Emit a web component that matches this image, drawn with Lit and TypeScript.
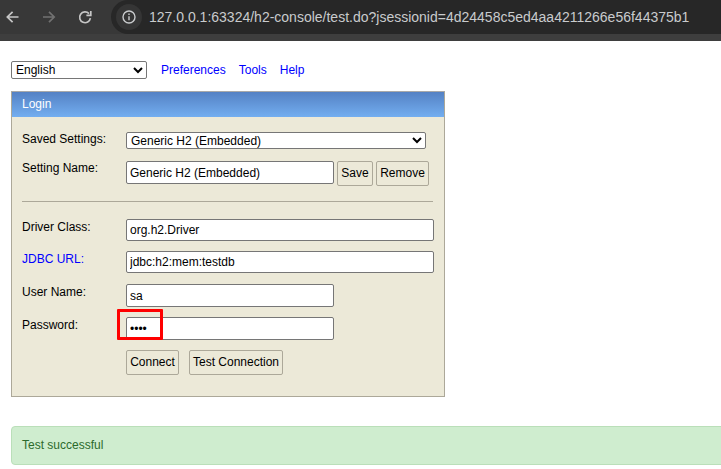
import { LitElement, html, css } from "lit";
import { customElement } from "lit/decorators.js";

@customElement("app-root")
export class AppRoot extends LitElement {
  static styles = css`
    :host { display: block; position: relative; width: 721px; height: 469px; overflow: hidden; background: #fff; font-family: "Liberation Sans", Arial, sans-serif; font-size: 12px; color: #000; }
    .chrome { height: 41px; box-sizing: border-box; background: #383838; display: flex; align-items: stretch; }
    .nav { width: 111px; flex: none; display: flex; align-items: center; height: 34px; padding-left: 4px; box-sizing: border-box; }
    .nav svg { width: 16px; height: 16px; display: block; flex: none; }
    .nav .fw { margin-left: 21px; }
    .nav .rl { margin-left: 20px; }
    .omni { flex: 1; display: flex; flex-direction: column; }
    .pill { height: 34px; background: #272727; border-radius: 17px 0 0 17px; display: flex; align-items: center; padding-left: 5px; color: #c9cbcd; font-size: 14px; white-space: nowrap; gap: 7px; }
    .strip { flex: 1; background: #3e3e3e; margin-left: -111px; }
    .info { width: 26px; height: 26px; border-radius: 50%; background: #353535; display: flex; align-items: center; justify-content: center; flex: none; }
    .top { display: flex; align-items: center; padding: 20px 0 0 11px; height: 18px; }
    select { font-family: "Liberation Sans", Arial, sans-serif; font-size: 12px; box-sizing: border-box; background: #fff; color: #000; border: 1px solid #767676; border-radius: 2px; margin: 0; }
    .lang { width: 136px; height: 18px; margin-right: 14px; }
    a { color: #0000ff; text-decoration: none; }
    .top a { margin-right: 13px; }
    .panel { box-sizing: border-box; margin: 12px 0 0 11px; width: 434px; height: 306px; border: 1px solid #aca899; border-top-color: #a9a9a9; background: #ece9d8; }
    .head { height: 25px; background: linear-gradient(#5481c4, #73aef0); color: #fff; padding-left: 10px; line-height: 24px; }
    .body { padding: 15px 0 0 10px; }
    .row { display: flex; align-items: flex-start; }
    .lab { width: 104px; flex: none; line-height: 14px; }
    input { font-family: "Liberation Sans", Arial, sans-serif; font-size: 12px; box-sizing: border-box; border: 1px solid #767676; border-radius: 2px; background: #fff; color: #000; padding: 1px 3px; margin: 0; outline: none; }
    .wide { width: 308px; }
    .mid { width: 208px; }
    button { font-family: "Liberation Sans", Arial, sans-serif; font-size: 12px; height: 25px; box-sizing: border-box; background: #ece9d8; color: #000; border: 1px solid #aca899; border-radius: 2px; padding: 0 0 2px; margin: 0; }
    .r1 { height: 29px; }
    .r1 select { width: 300px; height: 17px; }
    .r2 { height: 40px; }
    .r2 input { height: 23px; }
    .save { width: 36px; margin-left: 3px; }
    .remove { width: 53px; margin-left: 3px; }
    hr { margin: 0 0 17px; width: 411px; height: 1px; border: 0; background: #aca899; }
    .f { height: 32px; }
    .f input { height: 22px; }
    .f .lab { margin-top: 1px; }
    .f3 { height: 33px; }
    .f2 { height: 33px; }
    .f2 input { height: 23px; }
    .btns { padding-left: 104px; display: flex; gap: 10px; }
    .connect { width: 53px; }
    .test { width: 94px; }
    .msg { box-sizing: border-box; margin: 29px -8px 0 11px; height: 39px; background: #cfedcf; border: 1px solid #badfb9; border-radius: 4px; color: #2c6a2c; padding-left: 10px; line-height: 36px; }
    .mark { position: absolute; left: 117px; top: 309px; width: 46px; height: 31px; box-sizing: border-box; border: 3px solid #f00; border-radius: 1px; pointer-events: none; }
  `;

  render() {
    return html`
      <div class="chrome">
        <div class="nav">
          <svg viewBox="0 0 16 16" fill="none" stroke="#c6c6c6" stroke-width="1.7"><path d="M14.5 8H3.6M8.6 2.8 3.3 8l5.3 5.2"/></svg>
          <svg class="fw" viewBox="0 0 16 16" fill="none" stroke="#717171" stroke-width="1.7"><path d="M2 8h11M8 2.8 13.2 8 8 13.2"/></svg>
          <svg class="rl" viewBox="0 0 16 16" fill="none" stroke="#c6c6c6" stroke-width="1.7"><path d="M13.4 9.2A5.4 5.4 0 1 1 12 4.6"/><path d="M13.8 2v4.4H9.4" /></svg>
        </div>
        <div class="omni">
          <div class="pill">
            <span class="info"><svg width="16" height="16" viewBox="0 0 16 16" fill="none" stroke="#c9cbcd" stroke-width="1.4"><circle cx="8" cy="8" r="6"/><path d="M8 7.2v4M8 4.4v1.6"/></svg></span>
            <span>127.0.0.1:63324/h2-console/test.do?jsessionid=4d24458c5ed4aa4211266e56f44375b1</span>
          </div>
          <div class="strip"></div>
        </div>
      </div>
      <div class="top">
        <select class="lang"><option>English</option></select>
        <a href="#">Preferences</a><a href="#">Tools</a><a href="#">Help</a>
      </div>
      <div class="panel">
        <div class="head">Login</div>
        <div class="body">
          <div class="row r1"><span class="lab">Saved Settings:</span><select><option>Generic H2 (Embedded)</option></select></div>
          <div class="row r2"><span class="lab">Setting Name:</span><input class="mid" .value=${"Generic H2 (Embedded)"} /><button class="save">Save</button><button class="remove">Remove</button></div>
          <hr />
          <div class="row f"><span class="lab">Driver Class:</span><input class="wide" .value=${"org.h2.Driver"} /></div>
          <div class="row f f3"><span class="lab"><a href="#">JDBC URL:</a></span><input class="wide" .value=${"jdbc:h2:mem:testdb"} /></div>
          <div class="row f f2"><span class="lab">User Name:</span><input class="mid" .value=${"sa"} /></div>
          <div class="row f f2"><span class="lab">Password:</span><input class="mid" type="password" .value=${"test"} /></div>
          <div class="btns"><button class="connect">Connect</button><button class="test">Test Connection</button></div>
        </div>
      </div>
      <div class="msg">Test successful</div>
      <div class="mark"></div>
    `;
  }
}
